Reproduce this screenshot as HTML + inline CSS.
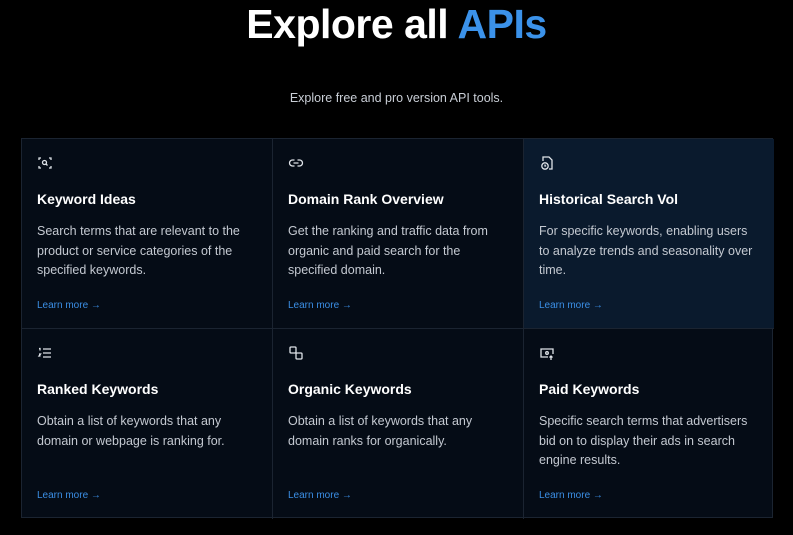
<!DOCTYPE html>
<html><head><style>
*{margin:0;padding:0;box-sizing:border-box;font-family:"Liberation Sans",Arial,sans-serif}
body{width:793px;height:535px;background:#000;overflow:hidden;position:relative;color:#fff}
h1{position:absolute;top:-1px;left:0;width:793px;text-align:center;font-size:41px;font-weight:bold;letter-spacing:-0.5px;line-height:50px}
h1 span{color:#3b92ea}
.sub{position:absolute;top:91px;width:793px;text-align:center;font-size:12.5px;color:#c9ced6}
.grid{position:absolute;left:21px;top:138px;width:752px;height:380px;border:1px solid #1b2431;display:grid;grid-template-columns:251px 251px 250px;grid-template-rows:190px 190px;background:#050c16}
.c{position:relative;border-right:1px solid #1b2431;border-bottom:1px solid #1b2431;padding-left:15px}
.c:nth-child(3n){border-right:none}
.c:nth-child(n+4){border-bottom:none}
.c.hl{background:#0a1a2d}
.ic{position:absolute;left:15px;top:16px}
.t{position:absolute;left:15px;top:52px;font-size:14px;font-weight:bold;color:#fff}
.d{position:absolute;left:15px;top:83px;width:214px;font-size:12.5px;line-height:19.5px;color:#c4c9d1}
.l{position:absolute;left:15px;top:161px;font-size:10px;color:#3b8fe6}
</style></head><body>
<h1>Explore all <span>APIs</span></h1>
<div class="sub">Explore free and pro version API tools.</div>
<div class="grid">
<div class="c"><svg class="ic" width="16" height="16" viewBox="0 0 16 16" fill="none" stroke="#dfe3e8" stroke-width="1.3"><path d="M2 5V3h2M12 3h2v2M14 11v2h-2M4 13H2v-2"/><circle cx="7.5" cy="7.5" r="2"/><path d="M9 9l1.5 1.5"/></svg><div class="t">Keyword Ideas</div><div class="d">Search terms that are relevant to the product or service categories of the specified keywords.</div><div class="l">Learn more →</div></div>
<div class="c"><svg class="ic" width="16" height="16" viewBox="0 0 16 16" fill="none" stroke="#dfe3e8" stroke-width="1.3"><path d="M6.5 5H4.5a3 3 0 000 6h2M9.5 5h2a3 3 0 010 6h-2M5.5 8h5"/></svg><div class="t">Domain Rank Overview</div><div class="d">Get the ranking and traffic data from organic and paid search for the specified domain.</div><div class="l">Learn more →</div></div>
<div class="c hl"><svg class="ic" width="16" height="16" viewBox="0 0 16 16" fill="none" stroke="#dfe3e8" stroke-width="1.3"><path d="M4 6V2h6l3 3v9h-3"/><circle cx="6" cy="11" r="3.2"/><path d="M6 9.5V11h1.2"/></svg><div class="t">Historical Search Vol</div><div class="d" style="width:218px">For specific keywords, enabling users to analyze trends and seasonality over time.</div><div class="l">Learn more →</div></div>
<div class="c"><svg class="ic" width="16" height="16" viewBox="0 0 16 16" fill="none" stroke="#dfe3e8" stroke-width="1.3"><path d="M6 4h8M6 8h8M6 12h8M2 3.5h1v2M2 9h1.5l-1.5 2h1.5"/></svg><div class="t">Ranked Keywords</div><div class="d">Obtain a list of keywords that any domain or webpage is ranking for.</div><div class="l">Learn more →</div></div>
<div class="c"><svg class="ic" width="16" height="16" viewBox="0 0 16 16" fill="none" stroke="#dfe3e8" stroke-width="1.3"><rect x="2" y="2" width="6" height="6" rx="1"/><rect x="8" y="8" width="6" height="6" rx="1"/></svg><div class="t">Organic Keywords</div><div class="d">Obtain a list of keywords that any domain ranks for organically.</div><div class="l">Learn more →</div></div>
<div class="c"><svg class="ic" width="16" height="16" viewBox="0 0 16 16" fill="none" stroke="#dfe3e8" stroke-width="1.3"><path d="M9 12H2V4h12v5"/><circle cx="8" cy="8" r="1.3"/><path d="M12 15v-4M10.5 12.5L12 11l1.5 1.5"/></svg><div class="t">Paid Keywords</div><div class="d">Specific search terms that advertisers bid on to display their ads in search engine results.</div><div class="l">Learn more →</div></div>
</div>
</body></html>
